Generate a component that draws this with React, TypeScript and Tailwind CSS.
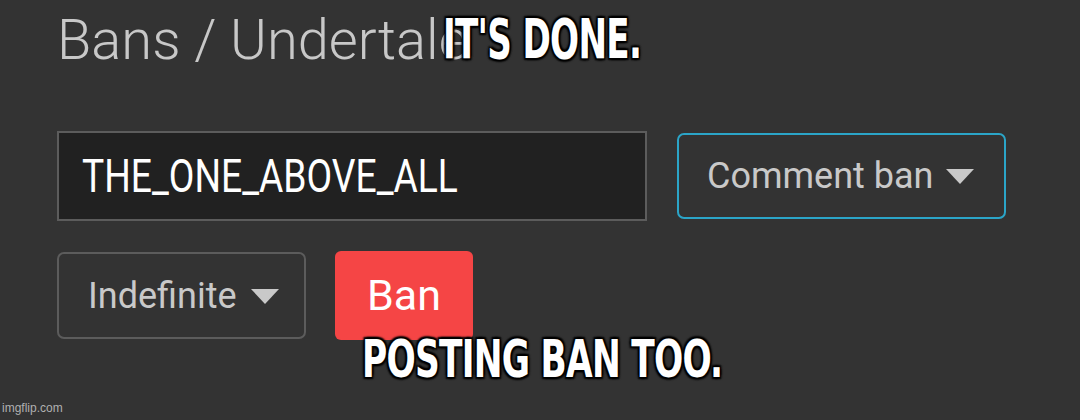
import React from 'react';

// ─── Pieces ───────────────────────────────────────────────────────────────────

function Caret() {
    return (
        <svg width="28" height="16" viewBox="0 0 28 16" className="shrink-0">
            <polygon points="0,1 28,1 14,16" fill="#c9c9c9" />
        </svg>
    );
}

function MemeText({ children, className }: { children: React.ReactNode; className: string }) {
    return (
        <div
            className={`absolute origin-top-left whitespace-nowrap text-white font-bold uppercase leading-none tracking-[-1px] [font-family:'DejaVu_Sans_Condensed','Liberation_Sans',sans-serif] [text-shadow:0_0_3px_#000,0_0_3px_#000,2px_2px_2px_#000,-2px_-2px_2px_#000,2px_-2px_2px_#000,-2px_2px_2px_#000] ${className}`}
        >
            {children}
        </div>
    );
}

// ─── Page ─────────────────────────────────────────────────────────────────────

export default function App() {
    return (
        <div className="relative w-[1080px] h-[420px] overflow-hidden bg-[#333333] [font-family:Roboto,'Liberation_Sans',sans-serif]">
            <div className="flex flex-col pl-[57px] pt-[12px]">
                <h1 className="text-[56px] font-light leading-none text-[#c8c8c8] h-[60px]">
                    Bans / Undertale
                </h1>

                {/* User + ban type */}
                <div className="flex items-center gap-[30px] mt-[59px]">
                    <div className="w-[590px] h-[90px] bg-[#212121] border-2 border-[#5c5c5c] flex items-center pl-[23px] text-white overflow-hidden">
                        <span className="text-[46px] leading-none origin-left scale-x-[0.81] whitespace-nowrap">
                            THE_ONE_ABOVE_ALL
                        </span>
                    </div>
                    <div className="w-[329px] h-[86px] rounded-[7px] border-2 border-[#2ba5c8] flex items-center pl-[28px] gap-[13px] text-[36px] text-[#c9c9c9]">
                        Comment ban
                        <Caret />
                    </div>
                </div>

                {/* Duration + submit */}
                <div className="flex items-center gap-[29px] mt-[30px]">
                    <div className="w-[249px] h-[87px] rounded-[7px] border-2 border-[#5c5c5c] flex items-center pl-[29px] gap-[14px] text-[36px] text-[#c9c9c9]">
                        Indefinite
                        <Caret />
                    </div>
                    <button className="w-[138px] h-[89px] rounded-[6px] bg-[#f54545] text-white text-[43px] flex items-center justify-center">
                        Ban
                    </button>
                </div>

                <div className="mt-[83px] -ml-[24px] text-[36px] leading-none text-[#c9c9c9] whitespace-nowrap">
                    Ibl bans for this community hi
                </div>
            </div>

            <MemeText className="left-[443px] top-[12px] text-[55px] scale-x-[0.69]">IT'S DONE.</MemeText>
            <MemeText className="left-[362px] top-[334px] text-[51px] scale-x-[0.75]">POSTING BAN TOO.</MemeText>

            <div className="absolute left-[2px] top-[402px] text-[12px] leading-none text-[#b0b0b0] [font-family:'Liberation_Sans',sans-serif]">
                imgflip.com
            </div>
        </div>
    );
}
